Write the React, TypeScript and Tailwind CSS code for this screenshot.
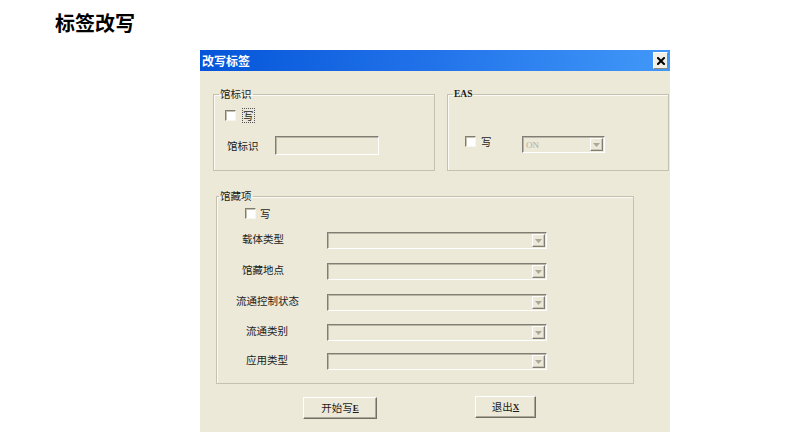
import React from "react";

const cjk = "font-['Noto_Sans_CJK_SC','Noto_Sans',sans-serif]";

function Check() {
  return (
    <div className="w-[11px] h-[11px] shrink-0 bg-white border border-t-[#7f7d74] border-l-[#7f7d74] border-b-[#f6f5ef] border-r-[#f6f5ef] shadow-[inset_1px_1px_0_#c3c0b0]" />
  );
}

function DropBtn() {
  return (
    <div className="w-[13px] h-[13px] bg-[#ece9d8] border border-t-white border-l-white border-b-[#7f7d74] border-r-[#7f7d74] shadow-[inset_-1px_-1px_0_#c9c6b6] flex items-center justify-center">
      <svg width="7" height="4" viewBox="0 0 7 4">
        <path d="M0 0 H7 L3.5 4 Z" fill="#aca899" />
      </svg>
    </div>
  );
}

function Combo({ width, text }: { width: string; text?: string }) {
  return (
    <div
      className={`${width} h-[17px] bg-[#ece9d8] border border-t-[#7f7d74] border-l-[#7f7d74] border-b-white border-r-white shadow-[inset_1px_1px_0_#b9b6a6] flex items-center justify-between pl-[3px] pr-[1px]`}
    >
      <span className="text-[9px] leading-[10px] text-[#b0ad9d] font-['Liberation_Serif',serif]">
        {text ?? ""}
      </span>
      <DropBtn />
    </div>
  );
}

const rows = [
  { label: "载体类型", pl: "pl-[25px]", mt: "mt-[13px]" },
  { label: "馆藏地点", pl: "pl-[25px]", mt: "mt-[14px]" },
  { label: "流通控制状态", pl: "pl-[19px]", mt: "mt-[14px]" },
  { label: "流通类别", pl: "pl-[29px]", mt: "mt-[13px]" },
  { label: "应用类型", pl: "pl-[29px]", mt: "mt-[12px]" },
];

export default function App() {
  return (
    <div className={`w-[791px] h-[445px] bg-white overflow-hidden ${cjk}`}>
      <h1 className="pl-[55px] pt-[12px] text-[20px] leading-[22px] font-bold text-black">
        标签改写
      </h1>
      <div className="ml-[200px] mt-[16px] w-[470px]">
        {/* title bar */}
        <div className="h-[21px] bg-linear-to-r from-[#0455d9] via-[#2273ea] to-[#4298f8] flex items-center justify-between">
          <span className="pl-[2px] text-[12px] leading-[14px] font-bold text-white">
            改写标签
          </span>
          <div className="mr-[2px] w-[15px] h-[17px] bg-[#f1efe6] border border-t-white border-l-white border-b-[#8c8a80] border-r-[#8c8a80] flex items-center justify-center">
            <svg width="8" height="8" viewBox="0 0 8 8">
              <path d="M1 1 L7 7 M7 1 L1 7" stroke="#000" strokeWidth="2" strokeLinecap="square" />
            </svg>
          </div>
        </div>
        {/* body */}
        <div className="h-[361px] bg-[#ece9d8] pt-[17px] text-[#1c1c1c]">
          <div className="flex pl-[13px] gap-[12px]">
            <fieldset className="w-[222px] h-[83px] border border-[#c4c1b1] shadow-[inset_1px_1px_0_#fbfaf5] p-0 m-0 min-w-0">
              <legend className="ml-[5px] px-[1px] text-[10.5px] leading-[12px]">馆标识</legend>
              <div className="flex items-center ml-[11px] mt-[8px]">
                <Check />
                <span className="ml-[6px] border border-dotted border-[#555] px-[0px] text-[10.5px] leading-[13px]">
                  写
                </span>
              </div>
              <div className="flex items-center mt-[13px] ml-[13px]">
                <span className="w-[48px] text-[10.5px] leading-[14px]">馆标识</span>
                <div className="w-[104px] h-[19px] bg-[#ece9d8] border border-t-[#7f7d74] border-l-[#7f7d74] border-b-white border-r-white shadow-[inset_1px_1px_0_#b9b6a6]" />
              </div>
            </fieldset>
            <fieldset className="w-[222px] h-[83px] border border-[#c4c1b1] shadow-[inset_1px_1px_0_#fbfaf5] p-0 m-0 min-w-0">
              <legend className="ml-[5px] px-[1px] text-[9.5px] leading-[12px] font-bold font-['Liberation_Serif',serif]">
                EAS
              </legend>
              <div className="flex items-start ml-[17px] mt-[36px]">
                <Check />
                <span className="ml-[5px] w-[41px] text-[10.5px] leading-[11px]">写</span>
                <Combo width="w-[83px]" text="ON" />
              </div>
            </fieldset>
          </div>

          <fieldset className="ml-[16px] mt-[19px] w-[418px] h-[194px] border border-[#c4c1b1] shadow-[inset_1px_1px_0_#fbfaf5] p-0 min-w-0">
            <legend className="ml-[2px] px-[1px] text-[10.5px] leading-[12px]">馆藏项</legend>
            <div className="flex items-center ml-[28px] mt-[6px]">
              <Check />
              <span className="ml-[4px] text-[10.5px] leading-[11px]">写</span>
            </div>
            {rows.map((r) => (
              <div key={r.label} className={`flex items-start ${r.mt}`}>
                <div className={`w-[110px] shrink-0 ${r.pl} text-[10.5px] leading-[14px] whitespace-nowrap`}>
                  {r.label}
                </div>
                <Combo width="w-[220px]" />
              </div>
            ))}
          </fieldset>

          <div className="flex items-start mt-[13px]">
            <button className="ml-[103px] w-[74px] h-[22px] bg-[#ece9d8] border border-t-white border-l-white border-b-[#716f64] border-r-[#716f64] shadow-[inset_-1px_-1px_0_#aca899] text-[10.5px] leading-[12px] text-[#1c1c1c] flex items-center justify-center">
              开始写<span className="underline text-[9px] font-bold font-['Liberation_Serif',serif]">E</span>
            </button>
            <button className="ml-[98px] -mt-[1px] w-[61px] h-[22px] bg-[#ece9d8] border border-t-white border-l-white border-b-[#716f64] border-r-[#716f64] shadow-[inset_-1px_-1px_0_#aca899] text-[10.5px] leading-[12px] text-[#1c1c1c] flex items-center justify-center">
              退出<span className="underline text-[9px] font-bold font-['Liberation_Serif',serif]">X</span>
            </button>
          </div>
        </div>
      </div>
    </div>
  );
}
